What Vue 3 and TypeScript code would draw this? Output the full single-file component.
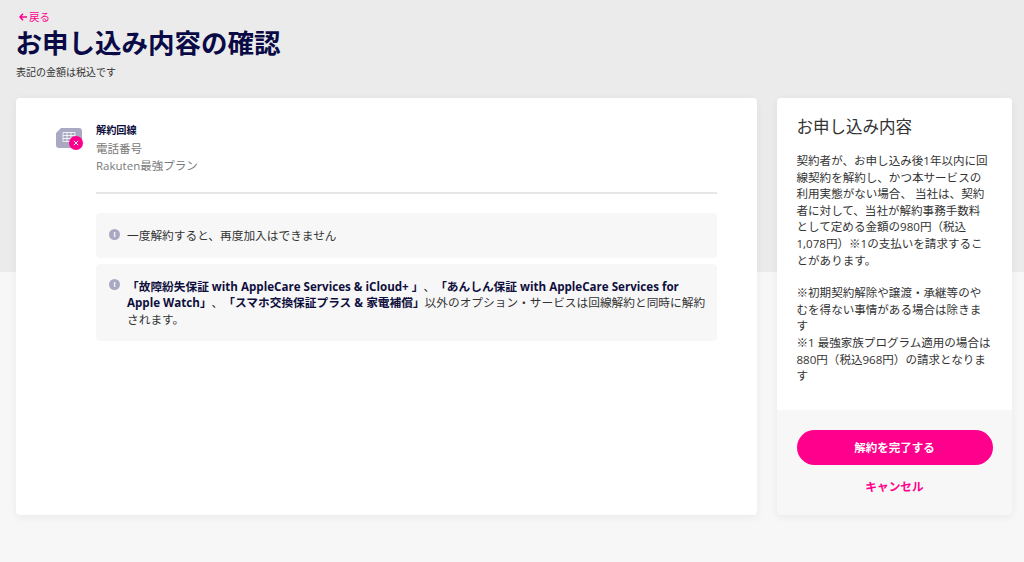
<script setup lang="ts">
const title: string = 'お申し込み内容の確認'
</script>

<template>
  <div class="page">
    <header class="head">
      <a class="back"><svg width="8" height="8" viewBox="0 0 8 8"><path d="M4 .8 1 4l3 3.2M1.2 4H8" fill="none" stroke="#ff008c" stroke-width="1.6"/></svg>戻る</a>
      <h1>{{ title }}</h1>
      <p class="tax">表記の金額は税込です</p>
    </header>
    <main class="cols">
      <section class="card">
        <div class="line">
          <div class="icon">
            <svg width="26" height="20" viewBox="0 0 26 20">
              <path d="M5 0h18a3 3 0 0 1 3 3v14a3 3 0 0 1-3 3H3a3 3 0 0 1-3-3V5z" fill="#a9a9c4"/>
              <path d="M7 4.500h12v9H7zM11 4.500v9M15 4.500v9M7 7.500h12M7 10.500h12" fill="none" stroke="#fff" stroke-width=".8"/>
            </svg>
            <svg class="badge" width="14" height="14" viewBox="0 0 14 14">
              <circle cx="7" cy="7" r="7" fill="#ff008c"/>
              <path d="M4.800 4.800l4.400 4.400M9.200 4.800l-4.400 4.400" stroke="#fff" stroke-width="1"/>
            </svg>
          </div>
          <div class="info">
            <div class="label">解約回線</div>
            <div class="sub first">電話番号</div>
            <div class="sub">Rakuten最強プラン</div>
          </div>
        </div>
        <hr />
        <div class="note one">
          <span class="i">i</span>
          <p>一度解約すると、再度加入はできません</p>
        </div>
        <div class="note two">
          <span class="i">i</span>
          <p><b>「故障紛失保証 <span class="en">with AppleCare Services &amp; iCloud+</span> 」</b>、<b>「あんしん保証 <span class="en">with AppleCare Services for</span><br /><span class="en">Apple Watch</span>」</b>、<b>「スマホ交換保証プラス &amp; 家電補償」</b>以外のオプション・サービスは回線解約と同時に解約<br />されます。</p>
        </div>
      </section>
      <aside class="side">
        <div class="top">
          <h2>お申し込み内容</h2>
          <p>契約者が、お申し込み後1年以内に回<br />線契約を解約し、かつ本サービスの<br />利用実態がない場合、 当社は、契約<br />者に対して、当社が解約事務手数料<br />として定める金額の980円（税込<br />1,078円）※1の支払いを請求するこ<br />とがあります。</p>
          <p class="gap">※初期契約解除や譲渡・承継等のや<br />むを得ない事情がある場合は除きま<br />す<br />※1 最強家族プログラム適用の場合は<br />880円（税込968円）の請求となりま<br />す</p>
        </div>
        <div class="foot">
          <button class="primary">解約を完了する</button>
          <a class="cancel">キャンセル</a>
        </div>
      </aside>
    </main>
  </div>
</template>

<style>
html, body { margin: 0; background: #f7f7f7; }
</style>

<style scoped>
.page {
  height: 562px;
  overflow: hidden;
  background: linear-gradient(#ebebeb 0, #ebebeb 272px, #f7f7f7 272px);
  font-family: "Open Sans", "Noto Sans CJK JP", sans-serif;
  color: #0f0f3d;
  text-spacing-trim: space-all;
}
.head { padding: 10px 16px 0 15.500px; height: 98px; box-sizing: border-box; }
.back { display: flex; align-items: center; gap: 2px; padding-left: 3.500px; height: 14px; font-size: 10.500px; line-height: 14px; color: #ff008c; }
h1 { margin: 1px 0 0; font-size: 26.500px; line-height: 36px; font-weight: 700; color: #0a0a46; letter-spacing: 0; }
.tax { margin: 3px 0 0 .5px; font-size: 10px; line-height: 16px; color: #333; }
.cols { display: flex; gap: 20px; padding: 0 12px 0 16px; }
.card {
  width: 741px; height: 417px; box-sizing: border-box; background: #fff; border-radius: 4px;
  padding: 24px 40px 0 80px; box-shadow: 0 2px 8px rgba(0,0,0,.06);
}
.line { position: relative; display: flex; height: 69.500px; border-bottom: 0; }
.icon { position: absolute; left: -40px; top: 6px; width: 26px; height: 20px; }
.badge { position: absolute; left: 13px; top: 8px; }
.label { font-size: 10.200px; line-height: 16px; font-weight: 700; color: #0f0f3d; }
.sub { font-size: 11.500px; line-height: 17px; color: #7a7a7a; }
.sub.first { margin-top: 2px; }
hr { margin: 0; border: 0; border-top: 2px solid #e6e6e6; }
.note { display: flex; gap: 7px; background: #f7f7f7; border-radius: 4px; padding: 0 13px; font-size: 11.700px; line-height: 16.600px; color: #333; }
.note p { margin: 0; white-space: nowrap; }
.note b { color: #0f0f3d; line-height: 0; }
.en { font-size: 11.600px; line-height: 0; }
.one { margin-top: 19.500px; height: 45px; align-items: center; }
.two { margin-top: 6px; height: 77px; padding-top: 13.500px; box-sizing: border-box; }
.i {
  flex: none; width: 11px; height: 11px; margin-top: 1px; border-radius: 50%; background: #a9a9c4; color: #fff;
  font-size: 7px; line-height: 11px; text-align: center; font-weight: 700;
}
.two .i { margin-top: 1px; }
.one .i { margin-top: -2px; }
.side {
  width: 235px; height: 417px; border-radius: 4px; overflow: hidden; display: flex; flex-direction: column;
  box-shadow: 0 2px 8px rgba(0,0,0,.06); background: #f7f7f7;
}
.top { height: 312px; box-sizing: border-box; background: #fff; padding: 18px 18px 0 19.500px; }
h2 { margin: 0 0 15px; font-size: 16.500px; line-height: 22px; font-weight: 400; color: #333; }
.top p { margin: 0; font-size: 11.550px; line-height: 16.600px; color: #333; white-space: nowrap; }
.top p.gap { margin-top: 16px; }
.foot { display: flex; flex-direction: column; align-items: center; padding-top: 20px; }
.primary {
  width: 196px; height: 35px; border: 0; border-radius: 18px; background: #ff008c; color: #fff;
  font: 700 11.500px/35px "Open Sans", "Noto Sans CJK JP", sans-serif; padding: 0;
}
.cancel { margin-top: 12px; font-size: 11.700px; line-height: 18px; font-weight: 700; color: #ff008c; }
</style>
